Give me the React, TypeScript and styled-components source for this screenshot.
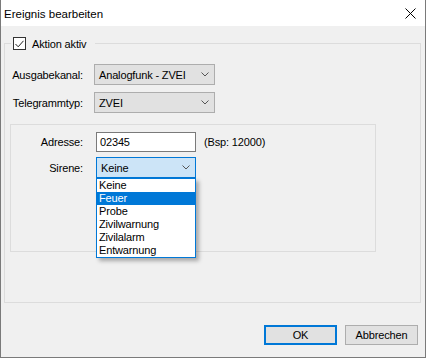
import styled, { createGlobalStyle } from "styled-components";

const GlobalStyle = createGlobalStyle`
  html, body {
    margin: 0;
    padding: 0;
    background: #f0f0f0;
  }
  body {
    font-family: "Liberation Sans", Arial, sans-serif;
    font-size: 11px;
    letter-spacing: -0.15px;
    color: #000;
  }
  * {
    box-sizing: border-box;
  }
`;

/* ----------------------- WINDOW ----------------------- */

const Window = styled.div`
  width: 426px;
  height: 358px;
  display: flex;
  flex-direction: column;
  border: 1px solid #7a7a7a;
  border-top: none;
  background: #f0f0f0;
`;

const TitleBar = styled.div`
  height: 26px;
  flex-shrink: 0;
  display: flex;
  align-items: center;
  justify-content: space-between;
  padding: 2px 9px 0 3px;
  background: #fff;
  font-size: 11.5px;
  letter-spacing: 0;
`;

const CloseIcon = styled.svg`
  width: 11px;
  height: 11px;
  margin-top: -2px;
`;

const Body = styled.div`
  flex: 1;
  display: flex;
  flex-direction: column;
  padding: 0 4px 12px 3px;
`;

/* ----------------------- GROUPS ----------------------- */

const Group = styled.div`
  margin-top: 17px;
  height: 260px;
  display: flex;
  flex-direction: column;
  align-items: flex-start;
  border: 1px solid #dcdcdc;
`;

const Legend = styled.label`
  display: flex;
  align-items: center;
  gap: 6px;
  height: 13px;
  margin: -7px 0 0 6px;
  padding: 0 9px 0 2px;
  background: #f0f0f0;
`;

const CheckBox = styled.span`
  width: 13px;
  height: 13px;
  display: flex;
  align-items: center;
  justify-content: center;
  border: 1px solid #333;
  background: #fff;
`;

const TopForm = styled.div`
  margin-top: 14px;
  display: grid;
  grid-template-columns: 78px 121px;
  column-gap: 11px;
  row-gap: 7px;
  align-items: center;
`;

const Label = styled.span`
  justify-self: end;
  white-space: nowrap;
`;

const InnerBox = styled.div`
  margin: 11px 0 0 5px;
  width: 366px;
  height: 128px;
  padding-top: 7px;
  border: 1px solid #dcdcdc;
`;

const InnerForm = styled.div`
  display: grid;
  grid-template-columns: 85px 100px auto;
  row-gap: 5px;
  align-items: center;

  ${Label} {
    padding-right: 13px;
  }
`;

const Hint = styled.span`
  padding-left: 8px;
`;

/* ----------------------- CONTROLS ----------------------- */

const ComboWrap = styled.div`
  position: relative;
`;

const Combo = styled.div<{ $focused?: boolean }>`
  height: 21px;
  display: flex;
  align-items: center;
  justify-content: space-between;
  padding: 0 5px 0 4px;
  border: 1px solid ${({ $focused }) => ($focused ? "#0078d7" : "#adadad")};
  background: ${({ $focused }) => ($focused ? "#cce4f7" : "#e1e1e1")};
  white-space: nowrap;
`;

const Chevron = styled.svg`
  width: 8px;
  height: 5px;
  flex-shrink: 0;
`;

const TextBox = styled.div`
  height: 20px;
  display: flex;
  align-items: center;
  padding-left: 3px;
  border: 1px solid #7a7a7a;
  background: #fff;
`;

const DropList = styled.ul`
  position: absolute;
  top: 100%;
  left: 0;
  width: 100%;
  margin: 0;
  padding: 0;
  list-style: none;
  border: 1px solid #0078d7;
  background: #fff;
  box-shadow: 3px 3px 4px rgba(0, 0, 0, 0.3);
  z-index: 2;
`;

const DropItem = styled.li<{ $selected?: boolean }>`
  height: 13px;
  line-height: 13px;
  padding-left: 2px;
  background: ${({ $selected }) => ($selected ? "#0078d7" : "transparent")};
  color: ${({ $selected }) => ($selected ? "#fff" : "#000")};
  white-space: nowrap;
`;

const ButtonRow = styled.div`
  margin-top: auto;
  display: flex;
  justify-content: flex-end;
  gap: 8px;
  padding-right: 3px;
`;

const Button = styled.button<{ $default?: boolean }>`
  width: 73px;
  height: 20px;
  padding: 0;
  font: inherit;
  letter-spacing: inherit;
  color: #000;
  background: #e1e1e1;
  border: ${({ $default }) =>
    $default ? "2px solid #0078d7" : "1px solid #adadad"};
`;

/* ----------------------- COMPONENT ----------------------- */

const ChevronIcon = () => (
  <Chevron viewBox="0 0 8 5">
    <path d="M0.5 0.5 L4 4 L7.5 0.5" fill="none" stroke="#555" />
  </Chevron>
);

const sirenen = [
  "Keine",
  "Feuer",
  "Probe",
  "Zivilwarnung",
  "Zivilalarm",
  "Entwarnung",
];

const App = () => {
  return (
    <>
      <GlobalStyle />
      <Window>
        <TitleBar>
          <span>Ereignis bearbeiten</span>
          <CloseIcon viewBox="0 0 11 11">
            <path d="M0.5 0.5 L10.5 10.5 M10.5 0.5 L0.5 10.5" stroke="#000" />
          </CloseIcon>
        </TitleBar>

        <Body>
          <Group>
            <Legend>
              <CheckBox>
                <svg width="9" height="8" viewBox="0 0 9 8">
                  <path
                    d="M0.5 4 L3.2 6.8 L8.5 0.8"
                    fill="none"
                    stroke="#222"
                    strokeWidth="1"
                  />
                </svg>
              </CheckBox>
              Aktion aktiv
            </Legend>

            <TopForm>
              <Label>Ausgabekanal:</Label>
              <Combo>
                Analogfunk - ZVEI
                <ChevronIcon />
              </Combo>
              <Label>Telegrammtyp:</Label>
              <Combo>
                ZVEI
                <ChevronIcon />
              </Combo>
            </TopForm>

            <InnerBox>
              <InnerForm>
                <Label>Adresse:</Label>
                <TextBox>02345</TextBox>
                <Hint>(Bsp: 12000)</Hint>

                <Label>Sirene:</Label>
                <ComboWrap>
                  <Combo $focused>
                    Keine
                    <ChevronIcon />
                  </Combo>
                  <DropList>
                    {sirenen.map((s) => (
                      <DropItem key={s} $selected={s === "Feuer"}>
                        {s}
                      </DropItem>
                    ))}
                  </DropList>
                </ComboWrap>
              </InnerForm>
            </InnerBox>
          </Group>

          <ButtonRow>
            <Button $default>OK</Button>
            <Button>Abbrechen</Button>
          </ButtonRow>
        </Body>
      </Window>
    </>
  );
};

export default App;
